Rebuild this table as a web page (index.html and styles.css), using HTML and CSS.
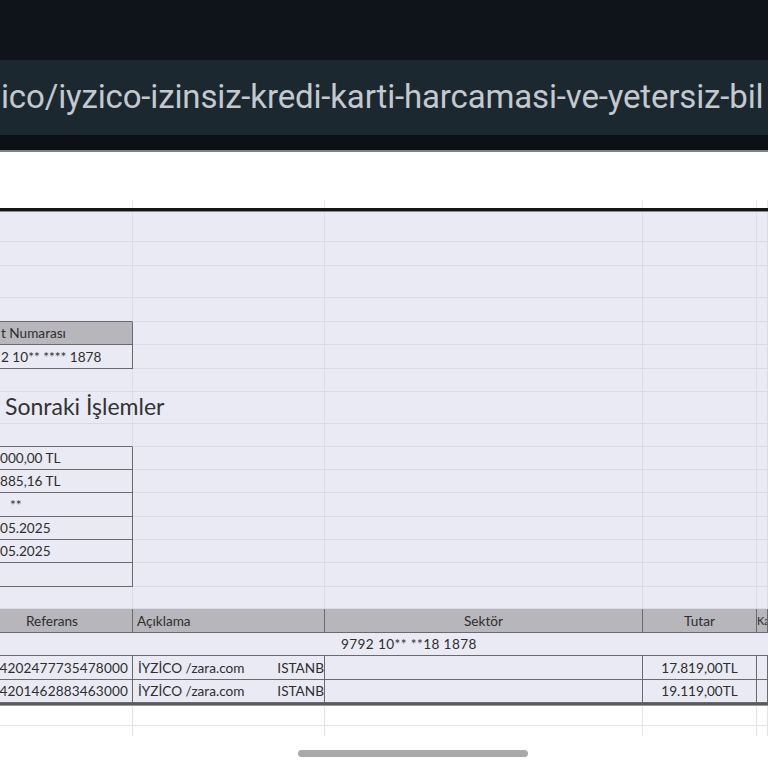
FILE: index.html
```html
<!DOCTYPE html>
<html lang="tr">
<head>
<meta charset="utf-8">
<title>Ekstre</title>
<link rel="stylesheet" href="styles.css">
</head>
<body>
<div class="screen">
  <div class="status"></div>
  <div class="urlbar"><span class="url">ico/iyzico-izinsiz-kredi-karti-harcamasi-ve-yetersiz-bil</span></div>
  <div class="strip"></div>
  <div class="page">
    <div class="gap"></div>
    <div class="row stub"><div class="c"></div><div class="c"></div><div class="c"></div><div class="c"></div><div class="c"></div></div>
    <div class="thick"></div>
    <div class="sheet">
      <div class="row h30"><div class="c"></div><div class="c"></div><div class="c"></div><div class="c"></div><div class="c"></div></div>
      <div class="row h24"><div class="c"></div><div class="c"></div><div class="c"></div><div class="c"></div><div class="c"></div></div>
      <div class="row h32"><div class="c"></div><div class="c"></div><div class="c"></div><div class="c"></div><div class="c"></div></div>
      <div class="row h24"><div class="c db"></div><div class="c"></div><div class="c"></div><div class="c"></div><div class="c"></div></div>
      <div class="row h23"><div class="c hd box lt">t Numarası</div><div class="c"></div><div class="c"></div><div class="c"></div><div class="c"></div></div>
      <div class="row h24"><div class="c box lt">2 10** **** 1878</div><div class="c"></div><div class="c"></div><div class="c"></div><div class="c"></div></div>
      <div class="row h23"><div class="c"></div><div class="c"></div><div class="c"></div><div class="c"></div><div class="c"></div></div>
      <div class="row h31 titlerow"><div class="c title">Sonraki İşlemler</div><div class="c"></div><div class="c"></div><div class="c"></div><div class="c"></div></div>
      <div class="row h24"><div class="c db"></div><div class="c"></div><div class="c"></div><div class="c"></div><div class="c"></div></div>
      <div class="row h23"><div class="c box lt flush">000,00 TL</div><div class="c"></div><div class="c"></div><div class="c"></div><div class="c"></div></div>
      <div class="row h23"><div class="c box lt flush">885,16 TL</div><div class="c"></div><div class="c"></div><div class="c"></div><div class="c"></div></div>
      <div class="row h24"><div class="c box lt stars">**</div><div class="c"></div><div class="c"></div><div class="c"></div><div class="c"></div></div>
      <div class="row h23"><div class="c box lt flush">05.2025</div><div class="c"></div><div class="c"></div><div class="c"></div><div class="c"></div></div>
      <div class="row h23"><div class="c box lt flush">05.2025</div><div class="c"></div><div class="c"></div><div class="c"></div><div class="c"></div></div>
      <div class="row h24"><div class="c box"></div><div class="c"></div><div class="c"></div><div class="c"></div><div class="c"></div></div>
      <div class="row h22"><div class="c"></div><div class="c"></div><div class="c"></div><div class="c"></div><div class="c"></div></div>
      <div class="row h24"><div class="c hd box ref">Referans</div><div class="c hd box lt desc">Açıklama</div><div class="c hd box ctr">Sektör</div><div class="c hd box ctr">Tutar</div><div class="c hd box ka">Ka</div></div>
      <div class="row h23 band"><div class="bandcell">9792 10** **18 1878</div></div>
      <div class="row h24"><div class="c box rt num">4202477735478000</div><div class="c box split"><span>İYZİCO /zara.com</span><span>ISTANB</span></div><div class="c box"></div><div class="c box ctr">17.819,00TL</div><div class="c box"></div></div>
      <div class="row h23"><div class="c box rt num">4201462883463000</div><div class="c box split"><span>İYZİCO /zara.com</span><span>ISTANB</span></div><div class="c box"></div><div class="c box ctr">19.119,00TL</div><div class="c box"></div></div>
    </div>
    <div class="thick2"></div>
    <div class="below">
      <div class="row h20"><div class="c"></div><div class="c"></div><div class="c"></div><div class="c"></div><div class="c"></div></div>
      <div class="row h10 open"><div class="c"></div><div class="c"></div><div class="c"></div><div class="c"></div><div class="c"></div></div>
    </div>
    <div class="home"><div class="indicator"></div></div>
  </div>
</div>
</body>
</html>
```
FILE: styles.css
```css
* { box-sizing: border-box; margin: 0; padding: 0; }
html, body { width: 768px; height: 768px; overflow: hidden; background: #ffffff; }
body { font-family: "Lato", "Noto Sans", sans-serif; }

.screen { width: 768px; height: 768px; display: flex; flex-direction: column; }

.status { height: 60px; background: #0e1419; flex: none; }
.urlbar {
  height: 75px; background: #1b2830; flex: none;
  display: flex; align-items: center; overflow: hidden; white-space: nowrap;
}
.url {
  font-family: "Roboto", "Inter", sans-serif; font-size: 33px; color: #c3c9ce;
  letter-spacing: -0.15px; margin-left: 1px; margin-top: -3px;
}
.strip { background: #0c1116; border-bottom: 2px solid #7d8184; flex: none; height: 17px; }

.page { flex: 1; display: flex; flex-direction: column; background: #fff; }
.gap { height: 48px; }

.row { display: grid; grid-template-columns: 133px 192px 318px 114px 11px; font-size: 13.6px; color: #2e2e2e; }
.c { border-right: 1px solid #d9dbe6; border-bottom: 1px solid #d8dbe7; display: flex; align-items: center; white-space: nowrap; overflow: hidden; }

.stub { height: 8px; }
.stub .c { border-bottom: none; border-right-color: #e6e7ee; }

.thick { height: 4px; background: #161616; border-bottom: 1px solid #8a8a8a; }

.sheet { background: #e9eaf3; }

.h20 { height: 20px; } .h22 { height: 22px; } .h23 { height: 23px; } .h24 { height: 24px; }
.h30 { height: 30px; } .h31 { height: 31px; } .h32 { height: 32px; } .h10 { height: 10px; }

.box { border-right-color: #6a6a6e; border-bottom-color: #6a6a6e; }
.db { border-bottom-color: #6a6a6e; }
.hd { background: #b6b6bb; }
.lt { justify-content: flex-start; padding-left: 1px; }
.desc { padding-left: 4px; }
.flush { padding-left: 0; }
.stars { padding-left: 10px; }
.rt { justify-content: flex-end; padding-right: 4px; }
.ctr { justify-content: center; }
.ref { justify-content: center; padding-right: 28px; }
.ka { justify-content: flex-start; padding-left: 0; font-size: 11px; }
.num { letter-spacing: 0.15px; }

.titlerow .c { overflow: visible; }
.title { font-size: 23px; color: #333; padding-left: 5px; align-items: flex-end; padding-bottom: 3px; position: relative; z-index: 1; }

.band { display: block; border-bottom: 1px solid #6a6a6e; }
.band .bandcell { height: 100%; display: flex; align-items: center; padding-left: 341px; letter-spacing: 0.4px; }

.split { justify-content: space-between; padding-left: 5px; padding-right: 0; }

.thick2 { height: 3px; background: #5b5b5f; border-bottom: 1px solid #9c9ca0; }

.below { background: #fff; }
.below .c { border-right-color: #e3e4ea; border-bottom-color: #e3e4ea; }
.open .c { border-bottom: none; }

.home { flex: 1; display: flex; justify-content: center; padding-top: 14px; }
.indicator { width: 230px; height: 7px; border-radius: 4px; background: #a9a9ab; margin-left: 58px; }
```
